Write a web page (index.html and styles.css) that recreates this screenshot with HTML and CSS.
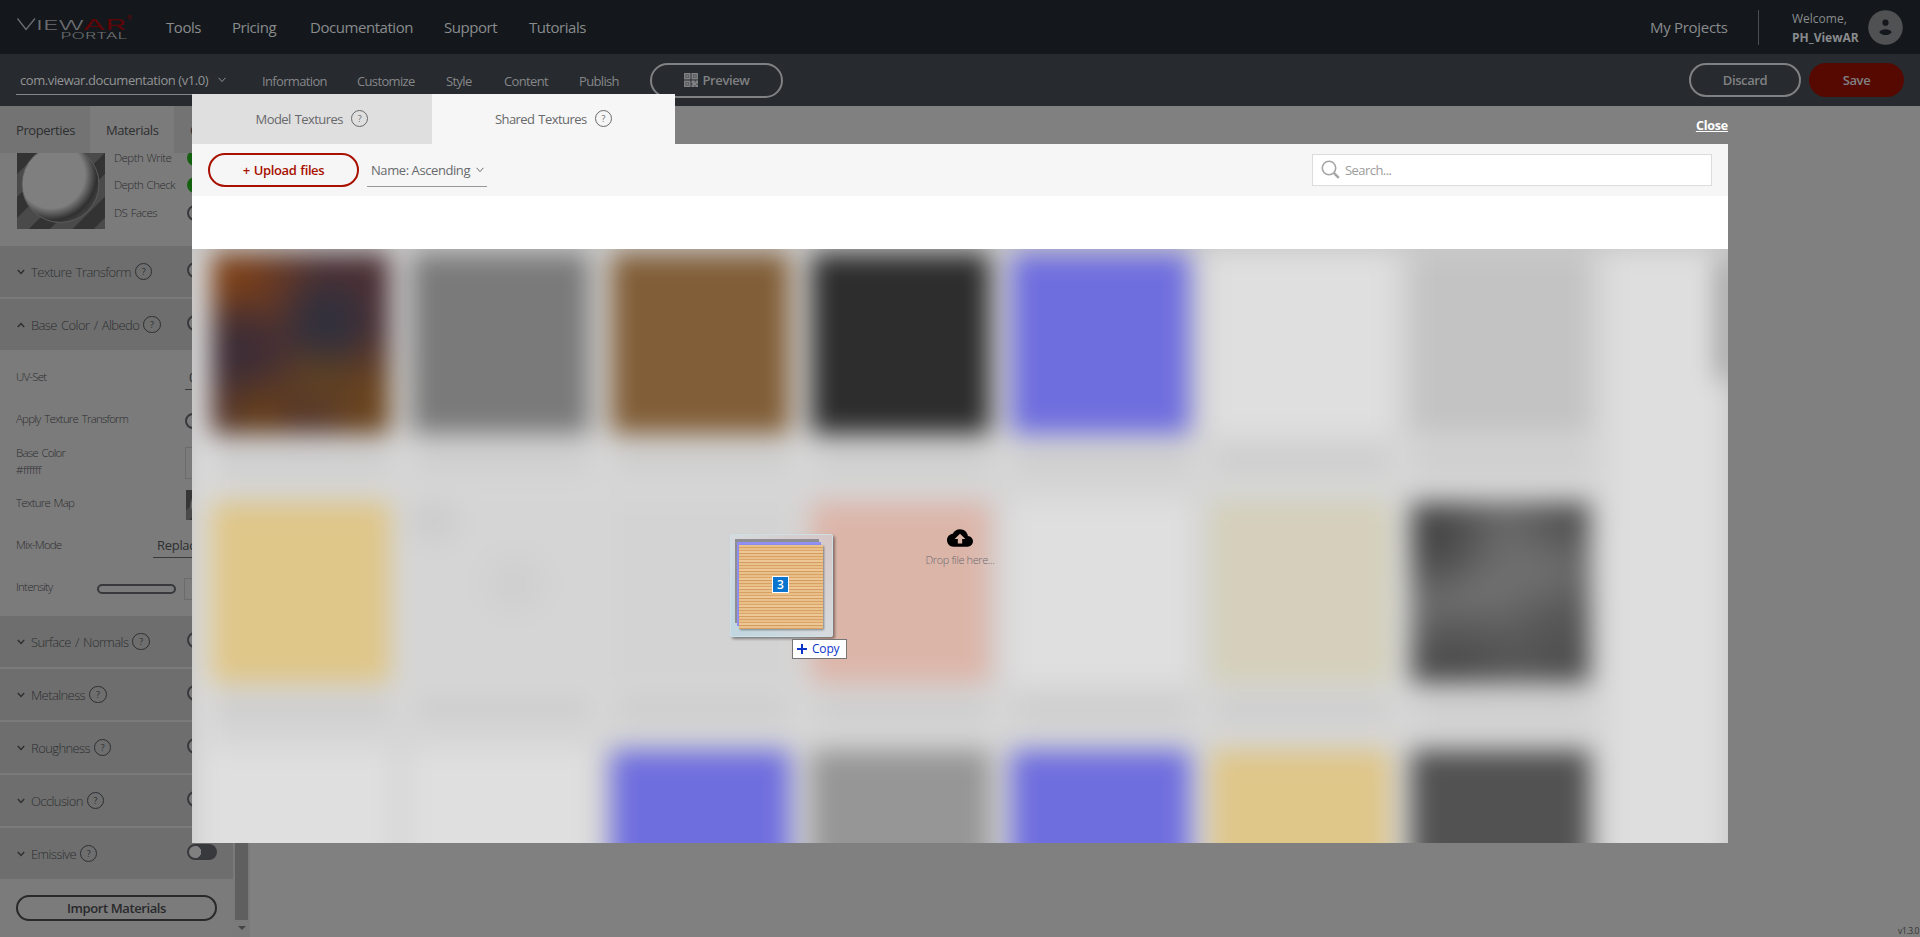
FILE: index.html
```html
<!DOCTYPE html>
<html lang="en">
<head>
<meta charset="utf-8">
<title>ViewAR Portal</title>
<link rel="stylesheet" href="styles.css">
</head>
<body>
<svg class="defs" width="0" height="0">
  <symbol id="down" viewBox="0 0 8 6"><path d="M.8 1 4 4.4 7.2 1" fill="none" stroke="currentColor" stroke-width="1.4"/></symbol>
  <symbol id="thin" viewBox="0 0 8 6"><path d="M.6 .8 4 4.6 7.4 .8" fill="none" stroke="currentColor" stroke-width="1"/></symbol>
</svg>
<header class="top">
  <svg class="logo" width="120" height="28" viewBox="0 0 120 28">
    <g fill="none" stroke="#6c6e71" stroke-width="1.3"><path d="M1.500 4.500 10 15.500 19 4.500"/></g>
    <text x="20" y="16" class="logo-a" textLength="48" lengthAdjust="spacingAndGlyphs">IEW</text>
    <text x="67" y="16" class="logo-b" textLength="43" lengthAdjust="spacingAndGlyphs">AR</text>
    <text x="111" y="7" class="logo-r">®</text>
    <text x="44.500" y="25" class="logo-c" textLength="67" lengthAdjust="spacingAndGlyphs">PORTAL</text>
  </svg>
  <nav class="nav"><a>Tools</a><a>Pricing</a><a>Documentation</a><a>Support</a><a>Tutorials</a></nav>
  <a class="projects">My Projects</a>
  <div class="user"><span>Welcome,</span><b>PH_ViewAR</b></div>
  <svg class="avatar" width="35" height="35" viewBox="0 0 35 35"><circle cx="17.500" cy="17.500" r="17.300" fill="#4f5153"/><circle cx="17.500" cy="12.700" r="3.100" fill="#14181c"/><path d="M11.300 22.200c.8-2.300 4-3 6.200-3s5.400.7 6.200 3c-1.600 2-3.800 2.900-6.200 2.900s-4.600-.9-6.200-2.900z" fill="#14181c"/></svg>
</header>
<div class="sub">
  <div class="app"><span>com.viewar.documentation (v1.0)</span><svg width="8" height="6"><use href="#thin"/></svg></div>
  <nav class="subnav"><a>Information</a><a>Customize</a><a>Style</a><a>Content</a><a>Publish</a></nav>
  <button class="pill preview"><svg width="14" height="14" viewBox="0 0 14 14"><path fill="#5b5d60" d="M0 0h6.600v6.600H0zM7.400 0H14v6.600H7.400zM0 7.400h6.600V14H0zM7.400 7.400H14V14H7.400z"/><g fill="none" stroke="#808284" stroke-width="1.200"><path d="M.7.700h5v5h-5zM8.300.700h5v5h-5zM.7 8.300h5v5h-5z"/></g><path fill="#808284" d="M2.500 2.500h1.500v1.500h-1.500zM10 2.500h1.500v1.500H10zM2.500 10h1.500v1.500h-1.500zM7.600 7.600h3v2h1.500v-2H14v3h-2v1.400h2v2h-2.500v-2H10v2H7.600v-2h1v-2h-1z"/></svg>Preview</button>
  <button class="pill discard">Discard</button>
  <button class="pill save">Save</button>
</div>
<main class="work">
  <aside class="panel">
    <div class="ptabs"><span class="pt">Properties</span><span class="pt on">Materials</span><span class="pt">C</span></div>
    <div class="mat">
      <svg class="ball" width="88" height="76" viewBox="0 0 88 76">
        <defs>
          <pattern id="st" width="31" height="31" patternUnits="userSpaceOnUse" patternTransform="rotate(45)"><rect width="31" height="31" fill="#4a4a4a"/><rect width="15" height="31" fill="#333"/></pattern>
          <radialGradient id="bg" cx=".38" cy=".38" r=".64"><stop offset=".68" stop-color="#7f7f7f"/><stop offset=".8" stop-color="#585858"/><stop offset=".92" stop-color="#303030"/><stop offset="1" stop-color="#3c3c3c"/></radialGradient>
        </defs>
        <rect width="88" height="76" fill="url(#st)"/><circle cx="43.500" cy="31" r="38.500" fill="url(#bg)" stroke="#5c5c5c"/>
      </svg>
      <div class="flags">
        <div><span>Depth Write</span><i class="tg green"></i></div>
        <div><span>Depth Check</span><i class="tg green"></i></div>
        <div><span>DS Faces</span><i class="tg"></i></div>
      </div>
    </div>
    <div class="sec"><svg width="8" height="6"><use href="#down"/></svg><span>Texture Transform</span><em class="q">?</em><i class="tg"></i></div>
    <div class="sec"><svg class="up" width="8" height="6"><use href="#down"/></svg><span>Base Color / Albedo</span><em class="q">?</em><i class="tg"></i></div>
    <div class="props">
      <div class="row tall"><span>UV-Set</span><div class="sel uv">0</div></div>
      <div class="row"><span>Apply Texture Transform</span><i class="tg at"></i></div>
      <div class="row tall"><span class="two">Base Color<br><span class="hex">#ffffff</span></span><div class="swatch"></div></div>
      <div class="row"><span>Texture Map</span><svg class="map" width="30" height="30" viewBox="0 0 88 88"><rect width="88" height="88" fill="#363636"/><path d="M0 60 60 0h28v10L10 88H0z" fill="#4a4a4a"/><circle cx="54" cy="44" r="40" fill="#7d7d7d" stroke="#555" stroke-width="3"/></svg></div>
      <div class="row tall"><span>Mix-Mode</span><div class="sel mix">Replace</div></div>
      <div class="row"><span>Intensity</span><div class="slider"></div><div class="num"></div></div>
    </div>
    <div class="sec"><svg width="8" height="6"><use href="#down"/></svg><span>Surface / Normals</span><em class="q">?</em><i class="tg"></i></div>
    <div class="sec"><svg width="8" height="6"><use href="#down"/></svg><span>Metalness</span><em class="q">?</em><i class="tg"></i></div>
    <div class="sec"><svg width="8" height="6"><use href="#down"/></svg><span>Roughness</span><em class="q">?</em><i class="tg"></i></div>
    <div class="sec"><svg width="8" height="6"><use href="#down"/></svg><span>Occlusion</span><em class="q">?</em><i class="tg"></i></div>
    <div class="sec"><svg width="8" height="6"><use href="#down"/></svg><span>Emissive</span><em class="q">?</em><i class="tg full"></i></div>
    <button class="pill import">Import Materials</button>
  </aside>
  <div class="scroll"><div class="thumb"></div><div class="arrow"></div></div>
  <div class="version">v1.3.0</div>
</main>

<section class="modal">
  <div class="mtop">
    <div class="mtab"><span>Model Textures</span><em class="q">?</em></div>
    <div class="mtab on"><span>Shared Textures</span><em class="q">?</em></div>
    <a class="close">Close</a>
  </div>
  <div class="tools">
    <button class="pill upload">+ Upload files</button>
    <div class="sort"><span>Name: Ascending</span><svg width="8" height="6"><use href="#thin"/></svg></div>
    <div class="search"><svg width="20" height="20" viewBox="0 0 20 20" fill="none" stroke="#a6a6a6"><circle cx="8" cy="8" r="6.700" stroke-width="1.600"/><path d="m12.800 12.800 5 5" stroke-width="2.600"/></svg><span>Search...</span></div>
  </div>
  <div class="strip"></div>
  <div class="drop">
    <div class="grid">
      <div class="card"><div class="tile rust"></div></div>
      <div class="card"><div class="tile g1"></div></div>
      <div class="card"><div class="tile brown"></div></div>
      <div class="card"><div class="tile black"></div></div>
      <div class="card"><div class="tile blue"></div></div>
      <div class="card"><div class="tile white"></div></div>
      <div class="card"><div class="tile silver"></div></div>
      <div class="card"><div class="tile sand"></div></div>
      <div class="card"><div class="tile pale"></div></div>
      <div class="card"><div class="tile pale2"></div></div>
      <div class="card"><div class="tile pink"></div></div>
      <div class="card"><div class="tile white"></div></div>
      <div class="card"><div class="tile olive"></div></div>
      <div class="card"><div class="tile rock"></div></div>
      <div class="card"><div class="tile white"></div></div>
      <div class="card"><div class="tile white"></div></div>
      <div class="card"><div class="tile blue"></div></div>
      <div class="card"><div class="tile g2"></div></div>
      <div class="card"><div class="tile blue"></div></div>
      <div class="card"><div class="tile sand"></div></div>
      <div class="card"><div class="tile dark"></div></div>
      <div class="gscroll"></div>
    </div>
    <div class="hint">
      <svg width="26" height="26" viewBox="0 0 24 24"><path d="M19.350 10.040C18.670 6.590 15.640 4 12 4 9.110 4 6.600 5.640 5.350 8.040 2.340 8.360 0 10.910 0 14c0 3.310 2.690 6 6 6h13c2.760 0 5-2.240 5-5 0-2.640-2.050-4.780-4.650-4.960zM14 13v4h-4v-4H7l5-5 5 5h-3z"/></svg>
      <span>Drop file here...</span>
    </div>
  </div>
</section>

<div class="ghost">
  <div class="sheet s1"></div><div class="sheet s2"></div><div class="sheet s3"></div>
  <b class="count">3</b>
</div>
<div class="tip"><svg width="10" height="10" viewBox="0 0 10 10"><path d="M5 0v10M0 5h10" stroke="#0b35c8" stroke-width="2"/></svg><span>Copy</span></div>
</body>
</html>
```
FILE: styles.css
```css
* { box-sizing: border-box; }
body { margin: 0; width: 1920px; height: 937px; overflow: hidden; background: #808080; font-family: "Open Sans", "Noto Sans", sans-serif; font-size: 13px; color: #2d2e30; }
.defs { position: absolute; }
button { font-family: inherit; padding: 0; background: none; }
span, a, b { white-space: nowrap; }
.top { height: 54px; background: #14181c; display: flex; align-items: center; color: #898b8d; }
.logo { margin: 1px 0 0 16px; }
.logo-a { font: 300 13px Inter, sans-serif; fill: #6c6e71; }
.logo-b { font: 400 14px Inter, sans-serif; fill: #5e0508; }
.logo-r { font: 7px Inter, sans-serif; fill: #5e0508; }
.logo-c { font: 300 8.5px Inter, sans-serif; fill: #6c6e71; }
.nav { display: grid; grid-template-columns: 66px 78px 134px 85px 60px; margin-left: 30px; font-size: 15px; letter-spacing: -.45px; }
.projects { margin-left: auto; width: 109px; height: 35px; line-height: 34px; border-right: 1px solid #4c4f52; font-size: 15px; letter-spacing: -.3px; }
.user { width: 76px; margin-left: 33px; display: flex; flex-direction: column; font-size: 12px; line-height: 19px; padding-top: 1px; }
.avatar { margin: 0 17px 0 0; }
.sub { height: 52px; background: #272a2e; display: flex; align-items: center; color: #85878a; }
.app { width: 218px; height: 29px; margin: 0 0 11px 16px; padding: 0 8px 0 4px; border-bottom: 1px solid #85878a; display: flex; align-items: center; justify-content: space-between; align-self: flex-end; color: #929496; letter-spacing: -.42px; }
.subnav { display: grid; grid-template-columns: 95px 89px 58px 75px 71px; margin-left: 28px; margin-top: 2px; letter-spacing: -.65px; }
.pill { border: 2px solid #7f8183; border-radius: 18px; height: 34px; font-size: 13px; font-weight: 600; color: #7f8183; letter-spacing: -.4px; display: flex; align-items: center; justify-content: center; }
.preview { width: 133px; height: 35px; gap: 5px; }
.discard { width: 112px; margin-left: auto; }
.save { width: 95px; margin: 0 16px 0 8px; background: #560900; border-color: #560900; }
.work { height: 831px; display: flex; background: #808080; }
.panel { width: 233px; background: #7b7b7b; overflow: hidden; }
.ptabs { position: relative; z-index: 1; height: 47px; display: flex; background: #737373; font-size: 13px; letter-spacing: -.4px; }
.pt { padding: 0 0 0 16px; line-height: 49px; width: 90px; }
.pt + .pt + .pt { width: 59px; }
.pt.on { width: 84px; background: #7b7b7b; }
.mat { height: 93px; display: flex; padding-left: 17px; font-size: 11.5px; font-weight: 300; letter-spacing: -.55px; word-spacing: 1px; }
.ball { flex: none; }
.flags { margin: -9px 0 0 9px; width: 103px; }
.flags div { height: 27.5px; display: flex; align-items: center; justify-content: space-between; }
.flags span { line-height: 10px; width: 72px; }
.tg { flex: none; width: 30px; height: 16px; border: 2px solid #38393c; border-radius: 8px; background: #7b7b7b; }
.tg.green { background: #14610f; border-color: #14610f; }
.tg.full { background: radial-gradient(circle at 6px 6px, #808080 6px, #38393c 6.5px); }
.sec { height: 51px; margin-bottom: 2px; background: #6e6e6e; display: flex; align-items: center; padding: 0 16px 0 17px; font-size: 13px; font-weight: 300; letter-spacing: -.6px; word-spacing: 1.5px; }
.sec span { margin: 1px 4px 0 6px; }
.sec .tg { margin: -3px 0 0 auto; }
.sec svg { flex: none; }
.up { transform: scaleY(-1); }
.q { flex: none; width: 17px; height: 17px; border: 1px solid currentColor; border-radius: 9px; font-style: normal; font-size: 9px; font-weight: 400; line-height: 15px; text-align: center; letter-spacing: 0; }
.props { height: 264px; }
.row { height: 30px; padding: 0 16px; display: flex; align-items: center; justify-content: space-between; font-size: 11.5px; font-weight: 300; letter-spacing: -.8px; word-spacing: 1.5px; }
.row > span { margin-top: -5px; }
.row.tall { height: 54px; }
.two { line-height: 17px; }
.hex { letter-spacing: -.45px; }
.sel { border-bottom: 1px solid #38393c; font-size: 13px; font-weight: 400; height: 22px; line-height: 19px; padding-left: 4px; margin-right: -6px; letter-spacing: -.3px; }
.uv { width: 38px; }
.mix { width: 70px; }
.at { margin-right: 2px; }
.swatch { width: 32px; height: 32px; border: 1px solid #6b6b6b; }
.row .map { margin-right: 1px; }
.slider { width: 79px; height: 10px; border: 2px solid #38393c; border-radius: 5px; margin-left: auto; margin-right: 8px; }
.num { width: 33px; height: 22px; border: 1px solid #6b6b6b; }
.import { width: 201px; height: 26px; margin: 16px 16px 0; color: #29292b; border-color: #29292b; border-radius: 13px; }
.scroll { width: 17px; background: #7a7a7a; display: flex; flex-direction: column; align-items: center; }
.thumb { width: 13px; height: 814px; background: #5f5f5f; }
.arrow { margin-top: 6px; border: 4px solid transparent; border-top-color: #444; }
.version { margin: auto 1px 0 auto; font-size: 8.5px; line-height: 12px; letter-spacing: -.4px; color: #333; }

.modal { position: absolute; z-index: 2; left: 192px; top: 94px; width: 1536px; color: #68696c; }
.mtop { display: flex; height: 50px; }
.mtab { width: 240px; background: #dfdfdf; display: flex; align-items: center; justify-content: center; gap: 8px; font-size: 13px; letter-spacing: -.55px; word-spacing: 1px; padding-bottom: 1px; }
.mtab.on { width: 243px; background: #f6f6f6; }
.close { margin: 23px 0 0 auto; color: #fff; font-weight: 700; text-decoration: underline; font-size: 12.5px; line-height: 18px; letter-spacing: -.2px; }
.tools { height: 52px; background: #f6f6f6; display: flex; align-items: center; padding: 0 16px; }
.upload { width: 151px; border-color: #a81000; color: #a81000; letter-spacing: -.4px; word-spacing: 1px; }
.sort { width: 120px; height: 33px; margin-left: 8px; padding: 0 3px 0 4px; border-bottom: 1px solid #97989a; display: flex; align-items: center; justify-content: space-between; letter-spacing: -.42px; }
.search { width: 400px; height: 32px; margin-left: auto; border: 1px solid #dcdcdc; background: #fff; display: flex; align-items: center; padding: 0 8px; gap: 4px; color: #9c9c9c; letter-spacing: -.55px; }
.strip { height: 53px; background: #fff; }
.mtab .q, .sec .q { width: 17.5px; height: 17.5px; }
.drop { height: 594px; overflow: hidden; background: #d9d9d9; display: grid; }
.grid { grid-area: 1 / 1; position: relative; width: 1536px; height: 760px; background: #dedede; padding: 4px 0 0 19px; display: grid; grid-template-columns: repeat(7, 200px); grid-template-rows: 249px 248px 248px; filter: blur(13px); box-shadow: 0 0 0 40px #c4c4c4; }
.card { background: #d6d6d6; }
.card::after { content: ""; display: block; width: 170px; height: 20px; margin: 16px 0 0 6px; background: #cccccc; }
.tile { width: 179px; height: 181px; }
.rust { background: radial-gradient(circle at 65% 38%, #30303c 8%, transparent 34%), radial-gradient(circle at 15% 52%, #3a2c36 5%, transparent 32%), radial-gradient(circle at 10% 12%, #7c4018 5%, transparent 40%), radial-gradient(circle at 60% 68%, #604222 4%, transparent 30%), radial-gradient(circle at 28% 88%, #643e1c 5%, transparent 28%), radial-gradient(circle at 92% 85%, #6a441e 8%, transparent 35%), #4b3034; }
.g1 { background: #7a7a7a; }
.g2 { background: #969696; }
.brown { background: #815e38; }
.black { background: #2d2d2d; }
.blue { background: #6f6ede; }
.white { background: #dfdfdf; }
.silver { background: #c3c3c3; }
.sand { background: #dfc689; }
.pale { background: radial-gradient(circle at 12% 8%, #cbcbcb 4%, transparent 16%), radial-gradient(ellipse at 58% 45%, #cdcdcd, transparent 30%), #d5d5d5; }
.pale2 { background: #d3d3d3; }
.pink { background: #dcb5a9; }
.olive { background: #d6cfbc; box-shadow: inset 0 0 0 12px #d3d1b8; }
.rock { background: radial-gradient(circle at 12% 18%, #464646 5%, transparent 30%), radial-gradient(circle at 90% 8%, #525252 3%, transparent 25%), radial-gradient(circle at 90% 90%, #505050 5%, transparent 30%), radial-gradient(circle at 20% 95%, #4c4c4c 5%, transparent 35%), linear-gradient(155deg, #666 25%, #707070 48%, #5a5a5a 70%); }
.dark { background: #525252; }
.gscroll { position: absolute; right: -4px; top: 10px; width: 14px; height: 120px; background: #909090; }
.hint { grid-area: 1 / 1; align-self: start; justify-self: center; margin-top: 276px; position: relative; display: flex; flex-direction: column; align-items: center; font-size: 11px; font-weight: 300; line-height: 17px; letter-spacing: -.4px; color: #6a6b6f; }
.hint svg { fill: #000; }

.ghost { position: absolute; z-index: 3; left: 730px; top: 534px; width: 103px; height: 103px; border: 1px solid #cfdfe6; border-radius: 2px; background: linear-gradient(45deg, #bfd6e0, #d6dadd 50%, #d6c6c6); box-shadow: 2px 2px 3px rgba(0,0,0,.4); }
.sheet { position: absolute; width: 84px; height: 84px; }
.s1 { left: 4px; top: 4px; background: #8e8e92; }
.s2 { left: 6px; top: 7px; background: #9090f4; }
.s3 { left: 8px; top: 10px; background: repeating-linear-gradient(#e8c18c 0 2px, #d9a066 2px 3px, #e9bf88 3px 5px, #dba56c 5px 6px, #edc795 6px 8px, #d59c60 8px 9px); box-shadow: 1px 1px 2px rgba(0,0,0,.4); }
.count { position: absolute; left: 41px; top: 41px; width: 17px; height: 17px; border: 1px solid #fff; background: #0a74ce; color: #fff; font-size: 12px; font-weight: 600; line-height: 15px; text-align: center; }
.tip { position: absolute; z-index: 3; left: 792px; top: 639px; width: 55px; height: 20px; border: 1px solid #767676; background: #fff; color: #0b35c8; font-size: 12px; display: flex; align-items: center; padding: 0 0 1px 4px; gap: 5px; letter-spacing: -.2px; }
```
